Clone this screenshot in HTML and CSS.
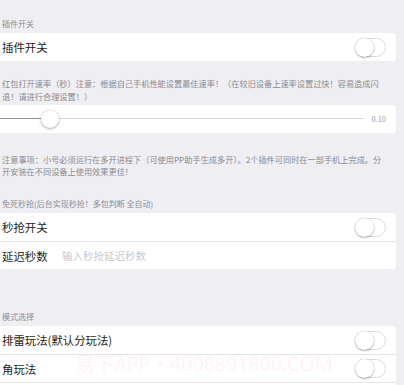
FILE: index.html
```html
<!DOCTYPE html>
<html>
<head>
<meta charset="utf-8">
<link rel="stylesheet" href="styles.css">
</head>
<body>
<div class="page">
  <div class="title t1">插件开关</div>
  <div class="card">
    <div class="row"><span class="label">插件开关</span><span class="toggle"></span></div>
  </div>

  <div class="desc d1">红包打开速率（秒）注意：根据自己手机性能设置最佳速率！（在较旧设备上速率设置过快！容易造成闪<br>退！请进行合理设置！）</div>
  <div class="card">
    <div class="row slider-row">
      <div class="track"><span class="fill"></span><span class="thumb"></span></div>
      <span class="value">0.10</span>
    </div>
  </div>

  <div class="desc d2">注意事项：小号必须运行在多开进程下（可使用PP助手生成多开）。2个插件可同时在一部手机上完成。分<br>开安装在不同设备上使用效果更佳！</div>

  <div class="title t3">免死秒抢(后台实现秒抢！多包判断 全自动)</div>
  <div class="card">
    <div class="row"><span class="label">秒抢开关</span><span class="toggle"></span></div>
    <div class="row sep"><span class="label fixed">延迟秒数</span><span class="placeholder">输入秒抢延迟秒数</span></div>
  </div>

  <div class="title t4">模式选择</div>
  <div class="card">
    <div class="row"><span class="label">排雷玩法(默认分玩法)</span><span class="toggle"></span></div>
    <div class="row sep"><span class="label">角玩法</span><span class="toggle"></span></div>
    <div class="row sep"><span class="label"></span><span class="toggle"></span></div>
  </div>
</div>
<div class="watermark">易下APP・4008891800.COM</div>
</body>
</html>
```

FILE: styles.css
```css
html, body {
  margin: 0;
  padding: 0;
}
body {
  background: #efeef3;
  font-family: "Noto Sans CJK SC", "Noto Sans", sans-serif;
  color: #1c1c1e;
  width: 404px;
  height: 385px;
  overflow: hidden;
  position: relative;
}
.page {
  width: 396px;
  display: flex;
  flex-direction: column;
}
.title {
  font-size: 8px;
  line-height: 10px;
  height: 10px;
  color: #8d8d92;
  padding-left: 2px;
  margin-bottom: 4px;
  white-space: nowrap;
}
.t1 { margin-top: 19px; }
.t3 { margin-top: 21px; }
.t4 { margin-top: 43px; }
.card {
  background: #ffffff;
  border-radius: 0 4px 4px 0;
  display: flex;
  flex-direction: column;
}
.row {
  height: 28px;
  display: flex;
  align-items: center;
  padding-left: 2px;
  padding-right: 10px;
  box-sizing: border-box;
}
.row.sep {
  border-top: 1px solid #e4e4e8;
}
.label {
  font-size: 11.4px;
  color: #1e1e20;
  white-space: nowrap;
  flex: 1;
}
.label.fixed {
  flex: 0 0 auto;
  width: 60px;
}
.placeholder {
  flex: 1;
  font-size: 10.5px;
  color: #c9c9ce;
  white-space: nowrap;
}
.toggle {
  width: 31px;
  height: 19px;
  border-radius: 10px;
  border: 1px solid #dcdcdf;
  box-sizing: border-box;
  background: #fff;
  position: relative;
  flex: 0 0 auto;
}
.toggle::before {
  content: "";
  position: absolute;
  left: -1px;
  top: -1px;
  width: 19px;
  height: 19px;
  border-radius: 50%;
  background: #fff;
  box-shadow: 0 1px 2px rgba(0,0,0,0.28), 0 0 0 0.5px rgba(0,0,0,0.12);
}
.desc {
  font-size: 8.2px;
  line-height: 12.8px;
  color: #8a8a8f;
  padding-left: 2px;
  white-space: nowrap;
}
.d1 { margin-top: 16px; margin-bottom: 2px; }
.d2 { margin-top: 20px; }
.slider-row {
  padding-left: 0;
  padding-right: 10px;
}
.track {
  flex: 1;
  height: 1px;
  background: #d6d6da;
  position: relative;
  margin-right: 7px;
}
.fill {
  position: absolute;
  left: 0;
  top: 0;
  width: 42px;
  height: 1px;
  background: #8e8e93;
}
.thumb {
  position: absolute;
  left: 41px;
  top: -8px;
  width: 18px;
  height: 18px;
  border-radius: 50%;
  background: #fff;
  box-shadow: 0 1px 3px rgba(0,0,0,0.28), 0 0 0 0.5px rgba(0,0,0,0.1);
}
.value {
  font-size: 7.5px;
  color: #a0a0a5;
  white-space: nowrap;
}
.watermark {
  position: absolute;
  left: 75px;
  top: 352px;
  font-family: "Noto Sans", "Noto Sans CJK SC", sans-serif;
  font-size: 19.6px;
  line-height: 24px;
  color: rgba(255, 150, 210, 0.14);
  white-space: nowrap;
  pointer-events: none;
}
```
